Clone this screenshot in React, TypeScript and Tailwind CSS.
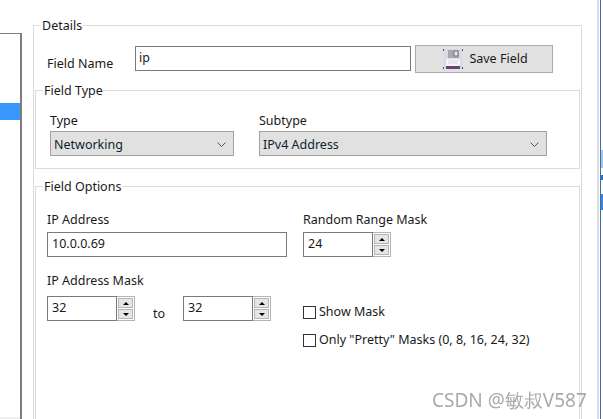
import React from 'react';

const FloppyIcon: React.FC = () => (
  <svg width="20" height="22" viewBox="0 0 20 22" className="shrink-0">
    <path d="M1 1h18v20H1z" fill="#d9d9e6" />
    <path d="M0.5 1v20M19.5 1v20" stroke="#555" strokeWidth="1" strokeDasharray="2 16" />
    <path d="M5 2h11v8H5z" fill="#a8a8b4" />
    <path d="M11 3h4v5h-4z" fill="#e4e4ec" stroke="#77777f" strokeWidth="1" />
    <path d="M3 11h14v7H3z" fill="#f4f4f6" />
    <path d="M5 13h10M5 15h10" stroke="#d5d5dc" strokeWidth="1" />
    <path d="M3 18h14v3H3z" fill="#6d3f78" />
  </svg>
);

const Chevron: React.FC = () => (
  <svg width="9" height="5" viewBox="0 0 9 5" className="shrink-0">
    <path d="M0.5 0.5l4 4 4-4" fill="none" stroke="#555" strokeWidth="1" />
  </svg>
);

const Select: React.FC<{ value: string; className: string }> = ({ value, className }) => (
  <div className={`flex h-[25px] items-center justify-between border border-[#a0a0a0] bg-[#e1e1e1] pl-[3px] pr-[7px] pt-[2px] text-[#0f1f30] ${className}`}>
    <span>{value}</span>
    <Chevron />
  </div>
);

const Spinner: React.FC<{ value: string }> = ({ value }) => (
  <div className="flex h-[25px] w-[88px]">
    <div className="flex-1 border border-[#7a7a7a] pl-1 leading-[22px]">{value}</div>
    <div className="flex w-[18px] flex-col gap-[1px] border border-l-0 border-[#b5b5b5] bg-white p-[1px]">
      <div className="flex flex-1 items-center justify-center border border-[#b5b5b5] bg-[#e6e6e6]">
        <span className="h-0 w-0 border-x-[3px] border-b-[3px] border-x-transparent border-b-black" />
      </div>
      <div className="flex flex-1 items-center justify-center border border-[#b5b5b5] bg-[#e6e6e6]">
        <span className="h-0 w-0 border-x-[3px] border-t-[3px] border-x-transparent border-t-black" />
      </div>
    </div>
  </div>
);

const Check: React.FC<{ label: string; className?: string }> = ({ label, className }) => (
  <div className={`flex h-[14px] items-center gap-[3px] ${className ?? ''}`}>
    <span className="h-[13px] w-[13px] border border-[#333]" />
    <span>{label}</span>
  </div>
);

export default function App() {
  return (
    <div className="relative flex h-[419px] w-[603px] overflow-hidden bg-white text-[12.5px] leading-[16px] text-[#1a1a1a] font-['Noto_Sans','Open_Sans',sans-serif]">
      {/* list pane cut off at the left */}
      <div className="w-[33px] shrink-0 pt-[33px]">
        <div className="flex h-[386px] w-[22px] flex-col border-r-2 border-t border-[#7d7d7d]">
          <div className="mt-[69px] h-[17px] bg-[#3a96ff]" />
          <div className="mt-auto h-[2px] bg-[#efefef]" />
        </div>
      </div>

      <fieldset className="mt-[16px] h-[420px] w-[549px] shrink-0 border border-[#dcdcdc] px-[1px]">
        <legend className="ml-[6px] px-[1px] pt-[2px]">Details</legend>

        <div className="flex h-[49px] items-start pl-[12px] pt-[12px]">
          <span className="mt-[10px] w-[88px]">Field Name</span>
          <div className="h-[25px] w-[276px] border border-[#7a7a7a] pl-[3px] leading-[22px]">ip</div>
          <div className="-mt-[1px] ml-[4px] flex h-[28px] w-[138px] items-center justify-center gap-[6px] border border-[#ababab] bg-[#e1e1e1] pl-[3px]">
            <FloppyIcon />
            <span>Save Field</span>
          </div>
        </div>

        <fieldset className="-mt-[2px] h-[88px] border border-[#dcdcdc]">
          <legend className="ml-[7px] px-[1px] pt-[2px]">Field Type</legend>
          <div className="flex gap-[25px] pl-[14px] pt-[14px]">
            <div className="flex flex-col gap-[2px]">
              <span>Type</span>
              <Select value="Networking" className="w-[184px]" />
            </div>
            <div className="flex flex-col gap-[2px]">
              <span>Subtype</span>
              <Select value="IPv4 Address" className="w-[288px]" />
            </div>
          </div>
        </fieldset>

        <fieldset className="mt-[8px] h-[300px] border border-[#dcdcdc]">
          <legend className="ml-[7px] px-[1px] pt-[2px]">Field Options</legend>
          <div className="flex pl-[11px] pt-[17px]">
            <div className="w-[256px]">
              <div className="mb-[4px]">IP Address</div>
              <div className="h-[25px] w-[240px] border border-[#7a7a7a] pl-1 leading-[22px]">10.0.0.69</div>
              <div className="mb-[7px] mt-[16px]">IP Address Mask</div>
              <div className="flex">
                <Spinner value="32" />
                <span className="mt-[10px] w-[48px] text-center">to</span>
                <Spinner value="32" />
              </div>
            </div>
            <div>
              <div className="mb-[4px]">Random Range Mask</div>
              <Spinner value="24" />
              <Check label="Show Mask" className="mt-[48px]" />
              <Check label={'Only "Pretty" Masks (0, 8, 16, 24, 32)'} className="mt-[14px]" />
            </div>
          </div>
        </fieldset>
      </fieldset>

      {/* neighbouring window at the right edge */}
      <div className="ml-[15px] flex h-full w-[7px] shrink-0">
        <div className="w-[2px] bg-[#dcdcdc]" />
        <div className="ml-[1px] flex flex-1 flex-col border-l border-[#2f6fb5]">
          <div className="h-[150px]" />
          <div className="h-[18px] bg-[#a9c4e0]" />
          <div className="h-[7px] bg-white" />
          <div className="h-[5px] bg-[#2f6fb5]" />
          <div className="h-[14px] bg-white" />
          <div className="h-[16px] bg-[#3d84d6]" />
        </div>
      </div>

      <span className="absolute left-[432px] top-[388px] text-[19px] leading-[24px] text-[#a9a9a9] blur-[0.4px]">
        CSDN @敏叔V587
      </span>
    </div>
  );
}
